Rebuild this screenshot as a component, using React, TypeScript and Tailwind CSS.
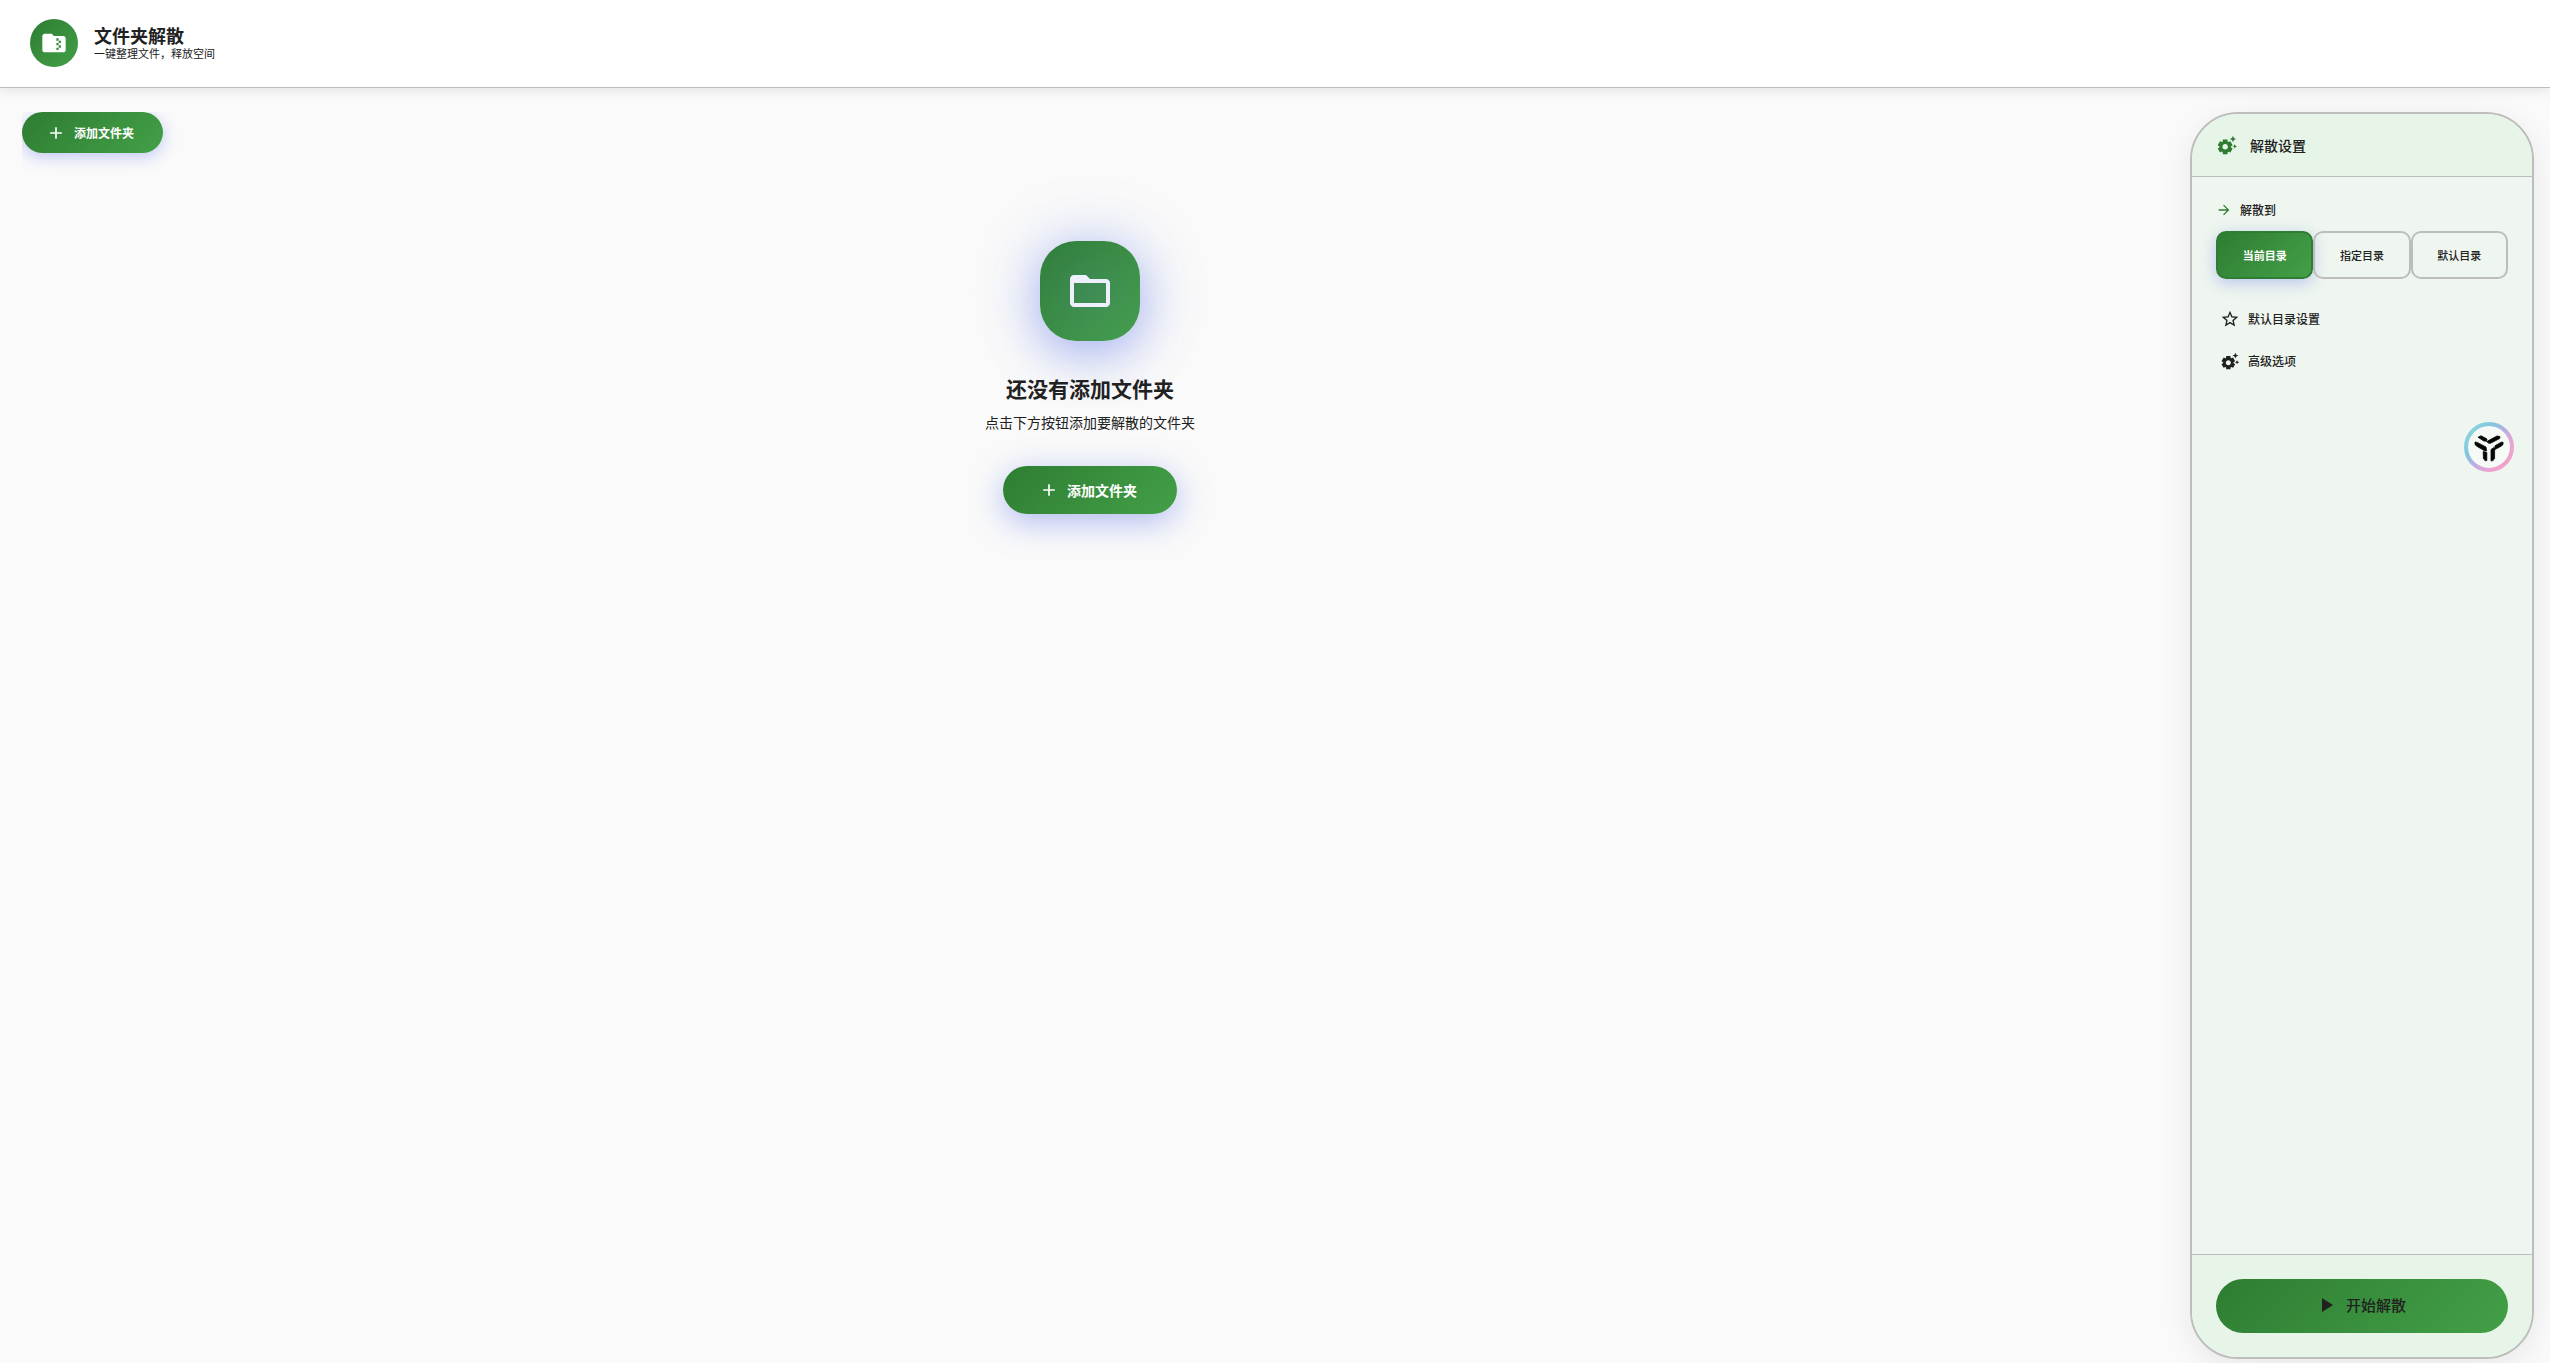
import React, { useState } from "react";

import {
  MdAdd,
  MdArrowForward,
  MdFolderOpen,
  MdFolderZip,
  MdPlayArrow,
  MdSettingsSuggest,
  MdStarBorder,
} from "react-icons/md";

const TARGETS = [
  { value: "current", label: "当前目录" },
  { value: "custom", label: "指定目录" },
  { value: "default", label: "默认目录" },
];

const Header = () => {
  return (
    <header className="relative flex items-center gap-4 h-22 px-[30px] pb-px bg-white border-b border-[#bdbdbd] shadow-[0_2px_12px_rgba(0,0,0,0.1)]">
      <div className="flex size-12 items-center justify-center rounded-full bg-linear-135 from-[#2e7d32] to-[#43a047] text-white">
        <MdFolderZip className="size-7" />
      </div>
      <div className="flex flex-col">
        <h1 className="text-lg leading-5 font-bold">文件夹解散</h1>
        <p className="text-[11px] leading-4">一键整理文件，释放空间</p>
      </div>
    </header>
  );
};

const EmptyState = () => {
  return (
    <section className="flex flex-col items-center pt-22">
      <div className="flex size-25 items-center justify-center rounded-[36px] bg-[radial-gradient(circle,rgba(102,126,234,0.14),rgba(102,126,234,0.06)_70%),linear-gradient(135deg,#2e7d32,#43a047)] text-[#eef0fd] shadow-[0_12px_48px_rgba(102,126,234,0.5),0_0_72px_rgba(102,126,234,0.2)]">
        <MdFolderOpen className="size-12" />
      </div>
      <h2 className="mt-8 text-[21px] leading-[30px] font-bold">还没有添加文件夹</h2>
      <p className="mt-2 text-sm leading-[22px]">点击下方按钮添加要解散的文件夹</p>
      <button
        type="button"
        className="mt-[33px] flex h-12 items-center gap-2 rounded-full bg-linear-135 from-[#2e7d32] to-[#43a047] pr-10 pl-9 text-sm font-bold text-white shadow-[0_8px_32px_rgba(102,126,234,0.5)]"
      >
        <MdAdd className="size-5" />
        添加文件夹
      </button>
    </section>
  );
};

const SettingsPanel = () => {
  const [target, setTarget] = useState("current");

  return (
    <aside className="flex w-86 shrink-0 flex-col overflow-hidden rounded-[48px] border-2 border-[#bdbdbd] bg-[#eff6ef] shadow-[0_8px_32px_rgba(0,0,0,0.08)]">
      <div className="flex h-[63px] items-center gap-3 border-b border-[#bdbdbd] bg-[#e7f5e8] px-6">
        <MdSettingsSuggest className="size-[22px] text-[#2e7d32]" />
        <h2 className="text-sm font-medium">解散设置</h2>
      </div>

      <div className="flex flex-1 flex-col px-6 pt-6">
        <div className="flex h-[18px] items-center gap-2 text-xs font-medium">
          <MdArrowForward className="size-4 text-[#2e7d32]" />
          <span id="target-label">解散到</span>
        </div>
        <div role="group" aria-labelledby="target-label" className="mt-3 grid grid-cols-3">
          {TARGETS.map(({ value, label }) => (
            <button
              key={value}
              type="button"
              aria-pressed={target === value}
              onClick={() => setTarget(value)}
              className={
                target === value
                  ? "h-12 rounded-[10px] border-2 border-[#2e7d32] bg-linear-135 from-[#2e7d32] to-[#43a047] text-[11px] font-bold text-white shadow-[0_4px_16px_rgba(102,126,234,0.4)]"
                  : "h-12 rounded-[10px] border-2 border-[#bdbdbd] text-[11px] font-medium"
              }
            >
              {label}
            </button>
          ))}
        </div>

        <div className="mt-5 flex flex-col items-start">
          <button type="button" className="flex h-[42px] items-center gap-2 px-1 pb-0.5 text-xs font-medium">
            <MdStarBorder className="size-5" />
            默认目录设置
          </button>
          <button type="button" className="flex h-[42px] items-center gap-2 px-1 pb-0.5 text-xs font-medium">
            <MdSettingsSuggest className="size-5" />
            高级选项
          </button>
        </div>
      </div>

      <div className="border-t border-[#bdbdbd] bg-[#e7f5e8] p-6">
        <button
          type="button"
          className="flex h-[54px] w-full items-center justify-center gap-2 rounded-full bg-linear-135 from-[#2e7d32] to-[#43a047] pr-1 pb-0.5 text-[15px] font-medium"
        >
          <MdPlayArrow className="size-6" />
          开始解散
        </button>
      </div>
    </aside>
  );
};

const AssistantBadge = () => {
  return (
    <button type="button" aria-label="助手" className="absolute top-[422px] right-9 size-[50px]">
      <svg viewBox="0 0 50 50" className="size-full">
        <defs>
          <linearGradient id="ring" x1="0.1" y1="0.15" x2="0.9" y2="0.85">
            <stop offset="0" stopColor="#8ad3dd" />
            <stop offset="0.25" stopColor="#80c6e0" />
            <stop offset="0.5" stopColor="#b9aee6" />
            <stop offset="0.8" stopColor="#eba3d3" />
            <stop offset="1" stopColor="#f0a3c8" />
          </linearGradient>
        </defs>
        <circle cx="25" cy="25" r="23" fill="#f5faf6" stroke="url(#ring)" strokeWidth="4" />
        <g fill="#050505" stroke="#050505" strokeWidth="0.8" strokeLinejoin="round">
          <path d="M14 15.2 L17 13.8 L23 17 L22.4 19.2 L19.8 19 Z" />
          <path d="M22.6 19.6 L33 14 L36 14.6 L35.6 16.6 L26.6 21.2 L24.8 21.3 Z" />
          <path d="M11 20 L13.2 20.4 L22 25 L22.6 28.8 L21 29 L12.4 24 L11 22.2 Z" />
          <path d="M39 20 L36.8 20.4 L31 23.8 L30.8 27.6 L37.6 24 L39 22.2 Z" />
          <path d="M19.2 29.6 L22.8 30.4 L22.8 38.6 L21.2 38.8 L19.4 36.2 Z" />
          <path d="M27 27.6 L30 25.4 L30.6 27 L30.6 36.2 L28.8 38.8 L27 38.8 Z" />
        </g>
      </svg>
    </button>
  );
};

const App = () => {
  return (
    <div className="relative flex min-h-screen flex-col bg-[#fafafa] font-['Noto_Sans_CJK_SC',sans-serif] text-[#212121]">
      <Header />
      <main className="flex flex-1 gap-8 pt-6 pr-4 pb-1 pl-[22px]">
        <div className="flex min-w-0 flex-1 flex-col overflow-hidden">
          <div>
            <button
              type="button"
              className="flex h-[41px] items-center gap-2 rounded-full bg-linear-135 from-[#2e7d32] to-[#43a047] pr-[29px] pl-6 text-xs font-bold text-white shadow-[0_4px_16px_rgba(102,126,234,0.4)]"
            >
              <MdAdd className="size-5" />
              添加文件夹
            </button>
          </div>
          <EmptyState />
        </div>
        <SettingsPanel />
      </main>
      <AssistantBadge />
    </div>
  );
};

export default App;
